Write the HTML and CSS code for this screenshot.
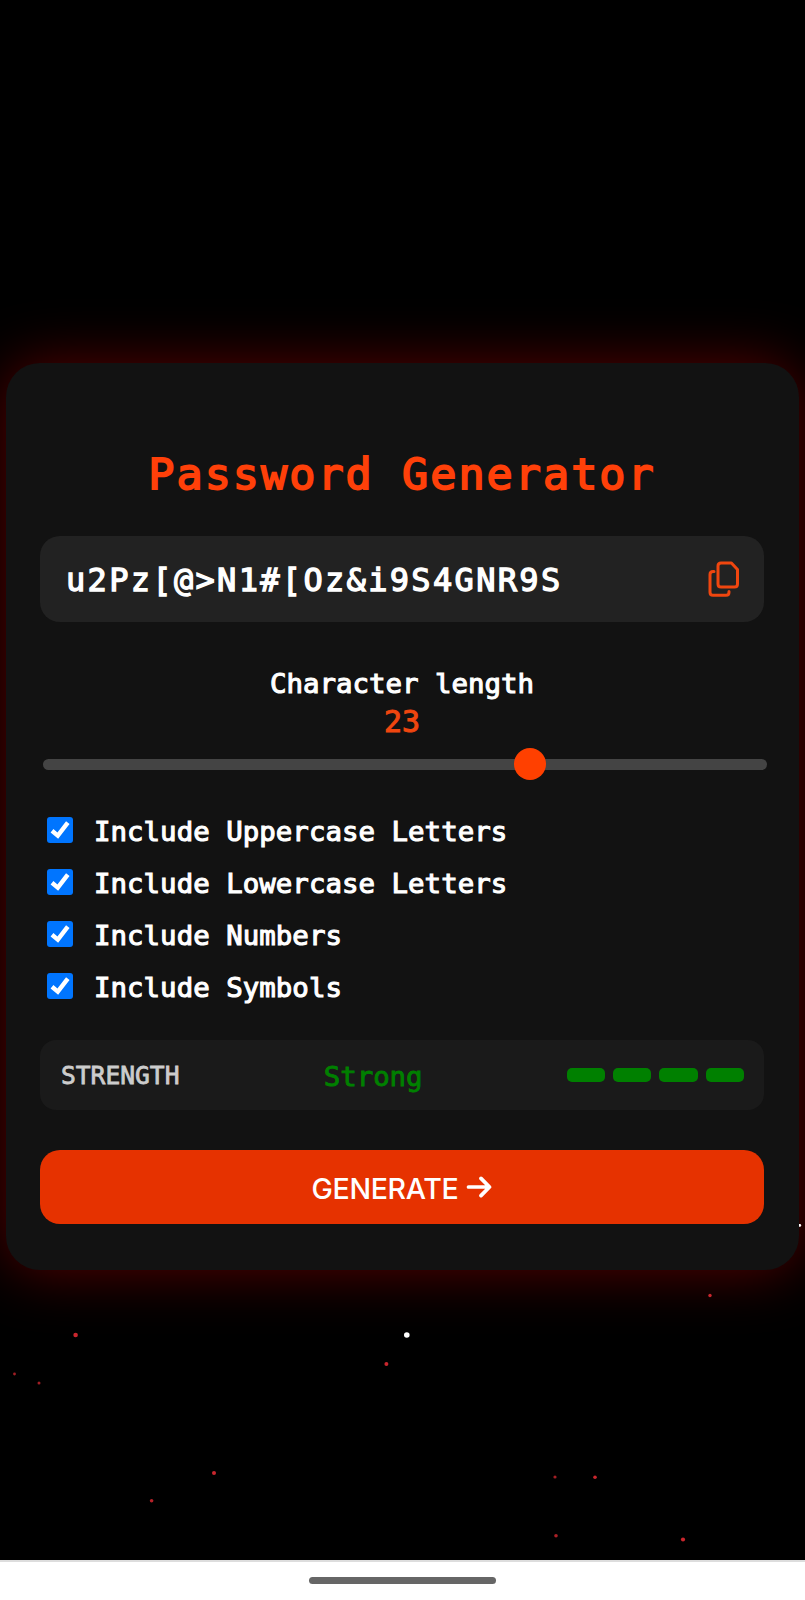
FILE: index.html
```html
<!DOCTYPE html>
<html lang="en">
<head>
<meta charset="utf-8">
<title>Password Generator</title>
<link rel="stylesheet" href="styles.css">
</head>
<body>
<div class="screen">
  <main class="card">
    <h1 class="title">Password Generator</h1>
    <div class="field">
      <span class="password">u2Pz[@&gt;N1#[Oz&amp;i9S4GNR9S</span>
      <svg class="copy" viewBox="0 0 32 36" width="32" height="36" fill="none" stroke="#f0460f" stroke-width="3" stroke-linejoin="round" stroke-linecap="round">
        <path d="M13 2H23.4L29.5 8.5V23Q29.5 26 26.5 26H13Q10 26 10 23V5Q10 2 13 2Z"/>
        <path d="M6 10.6H5Q2 10.6 2 13.6V31.3Q2 34.3 5 34.3H18Q21 34.3 21 31.3V30.4"/>
      </svg>
    </div>
    <div class="length-label">Character length</div>
    <div class="length-value">23</div>
    <div class="slider"><div class="track"></div><div class="thumb"></div></div>
    <div class="options">
      <label class="option"><svg class="box" viewBox="0 0 26 26"><path d="M5 13.8L10.8 18.6L20.8 5.6"/></svg>Include Uppercase Letters</label>
      <label class="option"><svg class="box" viewBox="0 0 26 26"><path d="M5 13.8L10.8 18.6L20.8 5.6"/></svg>Include Lowercase Letters</label>
      <label class="option"><svg class="box" viewBox="0 0 26 26"><path d="M5 13.8L10.8 18.6L20.8 5.6"/></svg>Include Numbers</label>
      <label class="option"><svg class="box" viewBox="0 0 26 26"><path d="M5 13.8L10.8 18.6L20.8 5.6"/></svg>Include Symbols</label>
    </div>
    <div class="strength">
      <span class="strength-label">STRENGTH</span>
      <span class="strength-value">Strong</span>
      <div class="bars"><i></i><i></i><i></i><i></i></div>
    </div>
    <button class="generate"><span>GENERATE</span>
      <svg class="arrow" viewBox="0 0 26 22" width="26" height="22" fill="none" stroke="#fff" stroke-width="3.7" stroke-linecap="round" stroke-linejoin="round"><path d="M2.5 11H23.5M15 2.4L23.5 11L15 19.6"/></svg>
    </button>
  </main>
  <svg class="stars" viewBox="0 0 805 1560" width="805" height="1560">
    <g fill="#c9262d">
      <circle cx="75.6" cy="1335" r="2.3"/>
      <circle cx="14.5" cy="1374" r="1.4" opacity=".8"/>
      <circle cx="39" cy="1383" r="1.5" opacity=".8"/>
      <circle cx="386.4" cy="1364" r="2"/>
      <circle cx="214" cy="1473" r="2"/>
      <circle cx="151.6" cy="1500.7" r="1.8" opacity=".9"/>
      <circle cx="555" cy="1477" r="1.6" opacity=".8"/>
      <circle cx="595" cy="1477.3" r="1.8"/>
      <circle cx="556" cy="1535.7" r="1.8" opacity=".85"/>
      <circle cx="683" cy="1539.5" r="2.1"/>
      <circle cx="710" cy="1295.5" r="1.7"/>
    </g>
    <circle cx="406.8" cy="1335" r="2.8" fill="#fff"/>
    <path d="M799 1224h.8a1.3 1.3 0 0 1 0 2.8H799z" fill="#fff"/>
  </svg>
</div>
<div class="navbar"><div class="pill"></div></div>
</body>
</html>
```
FILE: styles.css
```css
* { box-sizing: border-box; }
body {
  margin: 0;
  background: #000;
  color: #fff;
  font-family: "DejaVu Sans Mono", monospace;
}
.screen {
  position: relative;
  height: 1560px;
  padding: 363px 6px 0;
  overflow: hidden;
}
.stars { position: absolute; inset: 0; pointer-events: none; }
.card {
  height: 907px;
  padding: 85px 35px 0 34px;
  border-radius: 34px;
  background: #121212;
  box-shadow: 0 0 58px rgba(255, 0, 0, .35);
}
.title {
  margin: 0 0 36px;
  line-height: 52px;
  font-size: 43.5px;
  font-weight: 400;
  letter-spacing: 2px;
  text-align: center;
  white-space: nowrap;
  color: #ff4009;
  -webkit-text-stroke: 1.8px #ff4009;
}
.field {
  display: flex;
  align-items: center;
  justify-content: space-between;
  height: 86px;
  padding: 0 24px 0 26px;
  border-radius: 20px;
  background: #222;
}
.password {
  padding-top: 2px;
  font-size: 32px;
  letter-spacing: 2.32px;
  -webkit-text-stroke: 1.3px #fff;
}
.length-label {
  margin-top: 44px;
  line-height: 36px;
  font-size: 27.4px;
  text-align: center;
  -webkit-text-stroke: 1.1px #fff;
}
.length-value {
  padding-top: 1px;
  line-height: 37px;
  font-size: 30px;
  text-align: center;
  color: #f0460f;
  -webkit-text-stroke: 1px #f0460f;
}
.slider {
  position: relative;
  display: flex;
  align-items: center;
  height: 32px;
  margin: 8px -3px 0 3px;
}
.track { width: 100%; height: 11px; border-radius: 6px; background: #444; }
.thumb {
  position: absolute;
  left: 471px;
  width: 32px;
  height: 32px;
  border-radius: 50%;
  background: #ff4000;
}
.options { margin: 26px 0; }
.option {
  display: flex;
  align-items: center;
  gap: 21px;
  height: 51.75px;
  padding-left: 7px;
  font-size: 27.4px;
  letter-spacing: .04px;
  -webkit-text-stroke: 1.1px #fff;
}
.box {
  width: 26px;
  height: 26px;
  margin-top: -3px;
  border-radius: 3px;
  background: #0075ff;
  fill: none;
  stroke: #fff;
  stroke-width: 4.4;
}
.strength {
  display: flex;
  align-items: center;
  justify-content: space-between;
  height: 70px;
  margin-top: 27px;
  padding: 0 20px 0 21px;
  border-radius: 16px;
  background: #1a1a1a;
}
.strength-label { padding-top: 1px; font-size: 24.6px; color: #ccc; -webkit-text-stroke: .8px #ccc; }
.strength-value { padding-top: 2px; font-size: 27.4px; color: #008000; -webkit-text-stroke: .9px #008000; }
.bars { display: flex; gap: 8px; }
.bars i { width: 38.3px; height: 14px; border-radius: 5px; background: #008000; }
.generate {
  display: flex;
  align-items: center;
  justify-content: center;
  gap: 8px;
  width: 100%;
  height: 74px;
  margin-top: 40px;
  padding: 0;
  border: 0;
  border-radius: 20px;
  background: #e63200;
  color: #fff;
  font: 500 28.6px Inter, sans-serif;
  letter-spacing: -.35px;
}
.generate span { padding-top: 2px; }
.navbar {
  display: flex;
  justify-content: center;
  height: 40px;
  padding-top: 15px;
  border-top: 2px solid #ddd;
  background: #fff;
}
.pill { width: 187px; height: 7px; border-radius: 4px; background: #666; }
```
